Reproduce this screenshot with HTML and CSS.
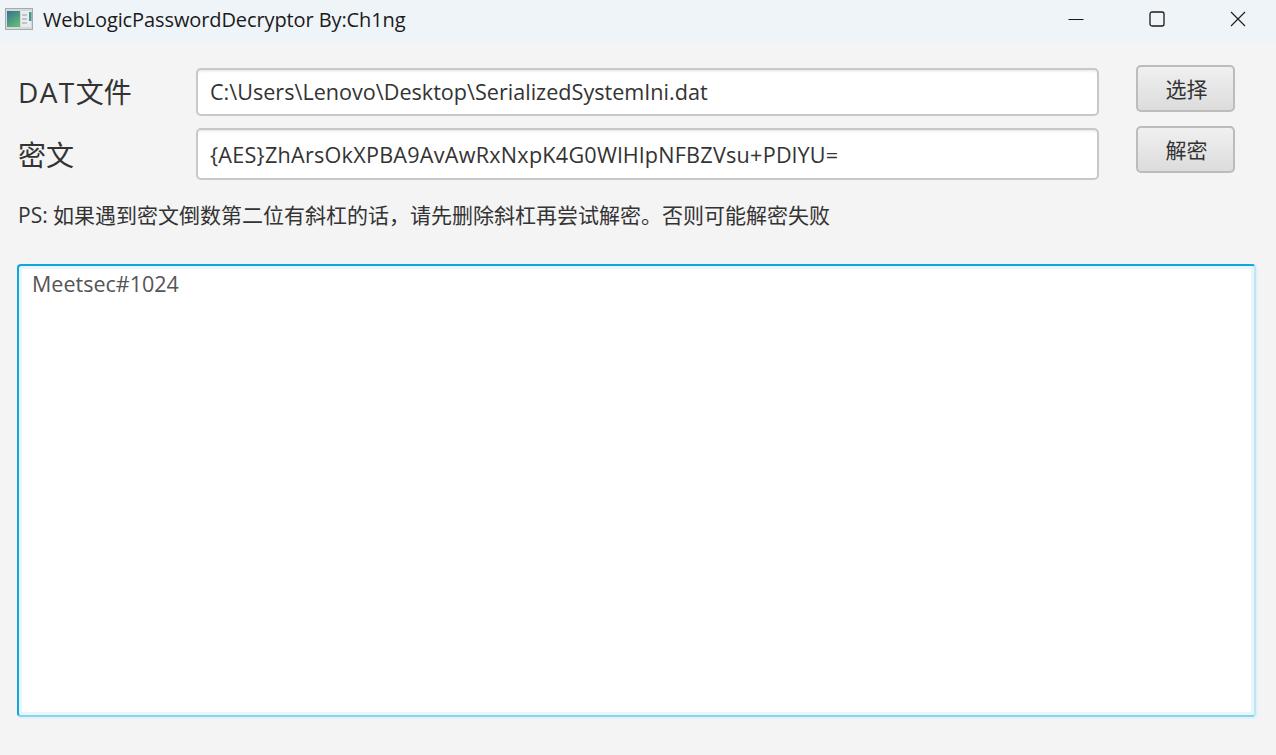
FILE: index.html
```html
<!DOCTYPE html>
<html lang="zh">
<head>
<meta charset="utf-8">
<title>WebLogicPasswordDecryptor By:Ch1ng</title>
<link rel="stylesheet" href="styles.css">
</head>
<body>
<div class="window">
  <header class="titlebar">
    <svg class="app-icon" width="28" height="22" viewBox="0 0 28 22">
      <defs><linearGradient id="g" x1="0" y1="0" x2="0.6" y2="1"><stop offset="0" stop-color="#33708f"/><stop offset="1" stop-color="#62b878"/></linearGradient></defs>
      <rect x="0.5" y="0.5" width="27" height="21" fill="#d5d9db" stroke="#a5abae"/>
      <rect x="2" y="3" width="13" height="16" fill="url(#g)"/>
      <rect x="16" y="3" width="10" height="16" fill="#e9ecec"/>
      <rect x="17" y="6" width="5" height="2" fill="#bfc5c7"/>
      <rect x="17" y="10" width="5" height="2" fill="#bfc5c7"/>
      <rect x="17" y="14" width="5" height="2" fill="#bfc5c7"/>
      <rect x="24" y="4" width="2.5" height="9" fill="#4a9590"/>
    </svg>
    <span class="title">WebLogicPasswordDecryptor By:Ch1ng</span>
    <div class="controls">
      <svg class="ctl" width="16" height="16" viewBox="0 0 16 16"><path d="M0.5 8.5H15.5" stroke="#1a1a1a" fill="none"/></svg>
      <svg class="ctl" width="16" height="16" viewBox="0 0 16 16"><rect x="1" y="1" width="14" height="14" rx="2" stroke="#1a1a1a" stroke-width="1.3" fill="none"/></svg>
      <svg class="ctl" width="16" height="16" viewBox="0 0 16 16"><path d="M1 1L15 15M15 1L1 15" stroke="#1a1a1a" stroke-width="1.1" fill="none"/></svg>
    </div>
  </header>
  <main class="content">
    <div class="form-row row-file">
      <label class="label"><span class="latin">DAT</span>文件</label>
      <div class="input">C:\Users\Lenovo\Desktop\SerializedSystemIni.dat</div>
      <button class="btn">选择</button>
    </div>
    <div class="form-row row-cipher">
      <label class="label">密文</label>
      <div class="input">{AES}ZhArsOkXPBA9AvAwRxNxpK4G0WlHlpNFBZVsu+PDlYU=</div>
      <button class="btn">解密</button>
    </div>
    <p class="note">PS: 如果遇到密文倒数第二位有斜杠的话，请先删除斜杠再尝试解密。否则可能解密失败</p>
    <div class="output">Meetsec#1024</div>
  </main>
</div>
</body>
</html>
```
FILE: styles.css
```css
* { box-sizing: border-box; }
html, body { margin: 0; height: 100%; }
body {
  background: #f4f4f4;
  color: #333;
  font-family: "Open Sans", "Noto Sans CJK SC", sans-serif;
  overflow: hidden;
}
.window { width: 1276px; height: 755px; display: flex; flex-direction: column; }
.titlebar {
  height: 43px;
  flex: none;
  background: #eff4f9;
  display: flex;
  align-items: center;
  padding-left: 5px;
}
.app-icon { flex: none; margin-top: -5px; }
.title { margin-left: 10px; font-size: 20px; color: #1a1a1a; margin-top: -5px; letter-spacing: -0.1px; }
.controls { margin-left: auto; display: flex; gap: 65px; padding-right: 30px; margin-top: -6px; }
.ctl { display: block; }
.content { flex: 1; padding: 23px 20px 38px 17px; display: flex; flex-direction: column; }
.form-row { display: grid; grid-template-columns: 179px 903px 136px; align-items: start; }
.row-file { height: 60px; }
.row-cipher { height: 54px; }
.label { font-size: 28px; line-height: 48px; color: #333; padding-left: 1px; margin-top: 2px; }
.row-cipher .label { margin-top: 5px; }
.latin { letter-spacing: 1.4px; }
.input {
  background: #fff;
  border: 2px solid #c8c8c8;
  border-radius: 5px;
  box-shadow: inset 0 3px 3px -2px #e4e4e4;
  padding-left: 12px;
  font-size: 21.6px;
  color: #333;
  display: flex;
  align-items: center;
  margin-top: 2px;
}
.row-file .input { height: 48px; padding-bottom: 2px; }
.row-cipher .input { height: 52px; letter-spacing: 0.25px; }
.btn {
  width: 99px;
  height: 47px;
  margin-left: 37px;
  border: 2px solid #bcbcbc;
  border-radius: 5px;
  background: linear-gradient(#f0f0f0, #dcdcdc);
  font: inherit;
  font-size: 21px;
  color: #333;
  padding: 0 0 2px 2px;
}
.row-file .btn { margin-top: -1px; }
.note { margin: 22px 0 0 1px; font-size: 21px; line-height: 26px; color: #333; }
.output {
  margin-top: 36px;
  flex: 1;
  background: #fff;
  border: 2px solid #bfe6f3;
  border-top-color: #12a6da;
  border-left-color: #12a6da;
  border-bottom-color: #8ad3ec;
  border-radius: 4px;
  box-shadow: inset 0 0 0 3px #e8f6fb, 1px 1px 0 1px #e2f2f8;
  padding: 2px 13px;
  font-size: 21.5px;
  line-height: 32px;
  color: #555;
}
```
